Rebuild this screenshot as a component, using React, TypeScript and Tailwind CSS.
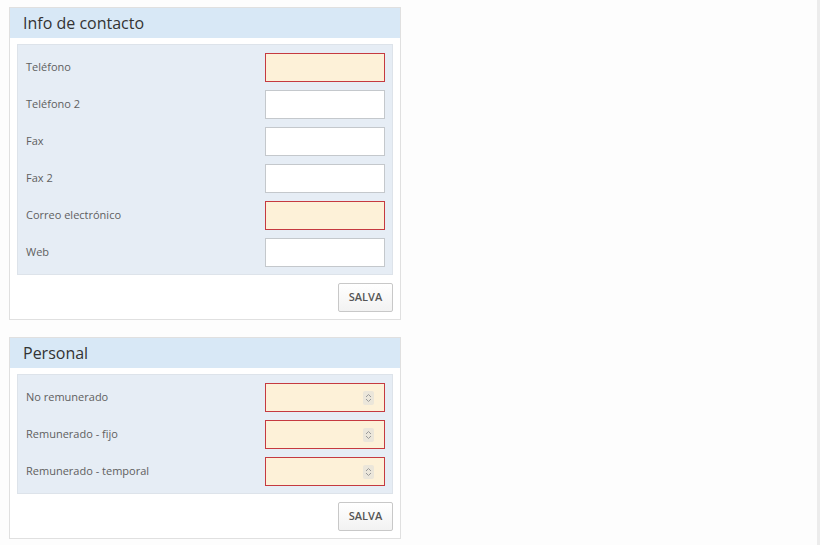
import React from "react";

type Field = { label: string; required?: boolean; number?: boolean };

const Spinner = () => (
  <span className="absolute right-[10px] top-1/2 -translate-y-1/2 w-[11px] h-[14px] bg-[#ebe6da] rounded-[2px] flex items-center justify-center">
    <svg width="7" height="10" viewBox="0 0 7 10" fill="none" stroke="#9a9a9a" strokeWidth="1">
      <path d="M1 4 L3.5 1.5 L6 4" />
      <path d="M1 6 L3.5 8.5 L6 6" />
    </svg>
  </span>
);

const Row = ({ f }: { f: Field }) => (
  <div className="flex items-center justify-between h-[29px]">
    <span className="text-[11px] text-[#606060] pl-[8px]">{f.label}</span>
    <div
      className={
        "relative w-[120px] h-[29px] border border-solid " +
        (f.required ? "bg-[#fdf1d8] border-[#c53a40]" : "bg-white border-[#c4c8cc]")
      }
    >
      {f.number && <Spinner />}
    </div>
  </div>
);

const Panel = ({ title, fields }: { title: string; fields: Field[] }) => (
  <div className="w-[392px] border border-[#e0e0e0] bg-white">
    <div className="h-[30px] bg-[#d8e8f6] flex items-center pl-[13px] text-[16px] text-[#333]">
      {title}
    </div>
    <div className="px-[7px] pt-[6px] pb-[7px]">
      <div className="bg-[#e6edf5] border border-[#dde3ea] pt-[8px] pb-[7px] pr-[7px] flex flex-col gap-[8px]">
        {fields.map((f) => (
          <Row key={f.label} f={f} />
        ))}
      </div>
      <div className="flex justify-end mt-[8px]">
        <button className="w-[55px] h-[29px] border border-[#c8c8c8] bg-gradient-to-b from-white to-[#f2f2f2] text-[11px] font-semibold text-[#555] rounded-[2px]">
          SALVA
        </button>
      </div>
    </div>
  </div>
);

export default function App() {
  return (
    <div
      className="w-[820px] h-[545px] bg-white flex"
      style={{ fontFamily: '"Open Sans", "Noto Sans", sans-serif' }}
    >
      <div className="w-[817px] h-full bg-[#fdfdfd] pl-[9px] pt-[7px] flex flex-col gap-[17px]">
        <Panel
          title="Info de contacto"
          fields={[
            { label: "Teléfono", required: true },
            { label: "Teléfono 2" },
            { label: "Fax" },
            { label: "Fax 2" },
            { label: "Correo electrónico", required: true },
            { label: "Web" },
          ]}
        />
        <Panel
          title="Personal"
          fields={[
            { label: "No remunerado", required: true, number: true },
            { label: "Remunerado - fijo", required: true, number: true },
            { label: "Remunerado - temporal", required: true, number: true },
          ]}
        />
      </div>
      <div className="w-[3px] h-full bg-[#ececec]" />
    </div>
  );
}
